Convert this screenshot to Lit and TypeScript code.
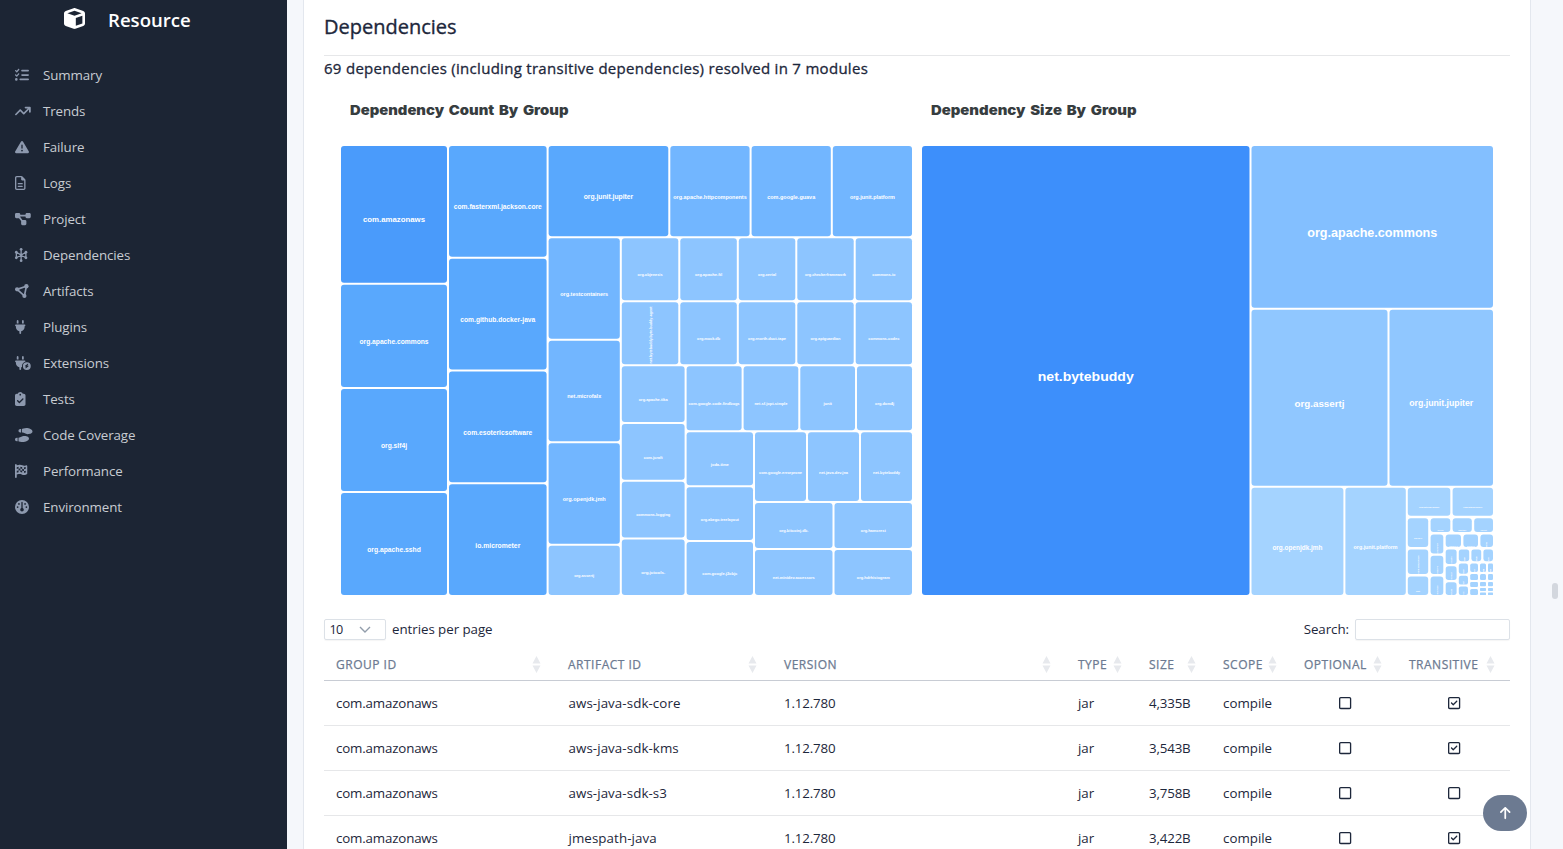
import { LitElement, html, svg, css } from "lit";
import { customElement, property } from "lit/decorators.js";

type Icon = { w: number; body: unknown };

const path = (w: number, d: string): Icon => ({ w, body: svg`<path d=${d}></path>` });

const ICONS: Record<string, Icon> = {
  cube: path(512, "M234.5 5.7c13.9-5 29.1-5 43.1 0l192 68.6C495 83.4 512 107.5 512 134.6V377.4c0 27-17 51.2-42.5 60.3l-192 68.6c-13.9 5-29.1 5-43.1 0l-192-68.6C17 428.6 0 404.5 0 377.4V134.6c0-27 17-51.2 42.5-60.3l192-68.6zM256 66L82.3 128 256 190l173.7-62L256 66zm32 368.6l160-57.1v-188L288 246.6v188z"),
  list: path(512, "M152.1 38.2c9.9 8.9 10.7 24 1.8 33.9l-72 80c-4.4 4.9-10.6 7.8-17.2 7.9s-12.9-2.4-17.6-7L7 113C-2.3 103.6-2.3 88.4 7 79s24.6-9.4 33.9 0l22.1 22.1 55.1-61.2c8.9-9.9 24-10.7 33.9-1.8zm0 160c9.9 8.9 10.7 24 1.8 33.9l-72 80c-4.4 4.9-10.6 7.8-17.2 7.9s-12.9-2.4-17.6-7L7 273c-9.4-9.4-9.4-24.6 0-33.9s24.6-9.4 33.9 0l22.1 22.1 55.1-61.2c8.9-9.9 24-10.7 33.9-1.8zM224 96c0-17.7 14.3-32 32-32H480c17.7 0 32 14.3 32 32s-14.3 32-32 32H256c-17.7 0-32-14.3-32-32zm0 160c0-17.7 14.3-32 32-32H480c17.7 0 32 14.3 32 32s-14.3 32-32 32H256c-17.7 0-32-14.3-32-32zM160 416c0-17.7 14.3-32 32-32H480c17.7 0 32 14.3 32 32s-14.3 32-32 32H192c-17.7 0-32-14.3-32-32zM48 368a48 48 0 1 1 0 96 48 48 0 1 1 0-96z"),
  trend: path(576, "M384 160c-17.7 0-32-14.3-32-32s14.3-32 32-32H544c17.7 0 32 14.3 32 32V288c0 17.7-14.3 32-32 32s-32-14.3-32-32V205.3L342.6 374.6c-12.5 12.5-32.8 12.5-45.3 0L192 269.3 54.6 406.6c-12.5 12.5-32.8 12.5-45.3 0s-12.5-32.8 0-45.3l160-160c12.5-12.5 32.8-12.5 45.3 0L320 306.7 466.7 160H384z"),
  warn: path(512, "M256 32c14.2 0 27.3 7.5 34.5 19.8l216 368c7.3 12.4 7.3 27.7 .2 40.1S486.3 480 472 480H40c-14.3 0-27.6-7.7-34.7-20.1s-7-27.8 .2-40.1l216-368C228.7 39.5 241.8 32 256 32zm0 128c-13.3 0-24 10.7-24 24V296c0 13.3 10.7 24 24 24s24-10.7 24-24V184c0-13.3-10.7-24-24-24zm32 224a32 32 0 1 0 -64 0 32 32 0 1 0 64 0z"),
  file: path(384, "M64 464c-8.8 0-16-7.2-16-16V64c0-8.8 7.2-16 16-16H224v80c0 17.7 14.3 32 32 32h80V448c0 8.8-7.2 16-16 16H64zM64 0C28.7 0 0 28.7 0 64V448c0 35.3 28.7 64 64 64H320c35.3 0 64-28.7 64-64V154.5c0-17-6.7-33.3-18.7-45.3L274.7 18.7C262.7 6.7 246.5 0 229.5 0H64zm56 256c-13.3 0-24 10.7-24 24s10.7 24 24 24H264c13.3 0 24-10.7 24-24s-10.7-24-24-24H120zm0 96c-13.3 0-24 10.7-24 24s10.7 24 24 24H264c13.3 0 24-10.7 24-24s-10.7-24-24-24H120z"),
  project: path(576, "M0 80C0 53.5 21.5 32 48 32h96c26.5 0 48 21.5 48 48V96H384V80c0-26.5 21.5-48 48-48h96c26.5 0 48 21.5 48 48v96c0 26.5-21.5 48-48 48H432c-26.5 0-48-21.5-48-48V160H192v16c0 1.7-.1 3.4-.3 5L272 288h96c26.5 0 48 21.5 48 48v96c0 26.5-21.5 48-48 48H272c-26.5 0-48-21.5-48-48V336c0-1.7 .1-3.4 .3-5L144 224H48c-26.5 0-48-21.5-48-48V80z"),
  hexnodes: {
    w: 448,
    body: svg`<g fill="none" stroke="currentColor" stroke-width="48"><path d="M224 60V452M50 156L398 356M50 356L398 156M50 156V356M398 156V356"></path></g>
      <circle cx="224" cy="48" r="50"></circle><circle cx="224" cy="464" r="50"></circle><circle cx="224" cy="256" r="56"></circle>
      <circle cx="48" cy="152" r="50"></circle><circle cx="400" cy="152" r="50"></circle><circle cx="48" cy="360" r="50"></circle><circle cx="400" cy="360" r="50"></circle>`,
  },
  nodes: {
    w: 512,
    body: svg`<path d="M76 196L416 84L344 432Z" fill="none" stroke="currentColor" stroke-width="62"></path>
      <circle cx="76" cy="196" r="76"></circle><circle cx="416" cy="80" r="80"></circle><circle cx="344" cy="436" r="76"></circle>`,
  },
  plug: path(384, "M96 0C78.3 0 64 14.3 64 32v96h64V32c0-17.7-14.3-32-32-32zM288 0c-17.7 0-32 14.3-32 32v96h64V32c0-17.7-14.3-32-32-32zM32 160c-17.7 0-32 14.3-32 32s14.3 32 32 32v32c0 77.4 55 142 128 156.8V480c0 17.7 14.3 32 32 32s32-14.3 32-32V412.8C297 398 352 333.4 352 256V224c17.7 0 32-14.3 32-32s-14.3-32-32-32H32z"),
  plugbolt: path(576, "M96 0C78.3 0 64 14.3 64 32v96h64V32c0-17.7-14.3-32-32-32zM288 0c-17.7 0-32 14.3-32 32v96h64V32c0-17.7-14.3-32-32-32zM32 160c-17.7 0-32 14.3-32 32s14.3 32 32 32v32c0 77.4 55 142 128 156.8V480c0 17.7 14.3 32 32 32s32-14.3 32-32V412.8c12.3-2.5 24.1-6.4 35.1-11.5c-2.1-10.8-3.1-21.9-3.1-33.3c0-80.3 53.8-148.1 127.3-169.2c.5-2.2 .7-4.5 .7-6.8c0-17.7-14.3-32-32-32H32zM432 512a144 144 0 1 0 0-288 144 144 0 1 0 0 288zm47.9-225c4.3 3.7 5.4 9.9 2.6 14.9L452.4 356H488c5.2 0 9.8 3.3 11.4 8.2s-.1 10.3-4.2 13.4l-96 72c-4.5 3.4-10.8 3.2-15.1-.6s-5.4-9.9-2.6-14.9L411.6 380H376c-5.2 0-9.8-3.3-11.4-8.2s.1-10.3 4.2-13.4l96-72c4.5-3.4 10.8-3.2 15.1 .6z"),
  clipboard: path(384, "M192 0c-41.8 0-77.4 26.7-90.5 64H64C28.7 64 0 92.7 0 128V448c0 35.3 28.7 64 64 64H320c35.3 0 64-28.7 64-64V128c0-35.3-28.7-64-64-64H282.5C269.4 26.7 233.8 0 192 0zm0 64a32 32 0 1 1 0 64 32 32 0 1 1 0-64zM305 273L177 401c-9.4 9.4-24.6 9.4-33.9 0L79 337c-9.4-9.4-9.4-24.6 0-33.9s24.6-9.4 33.9 0l47 47L271 239c9.4-9.4 24.6-9.4 33.9 0s9.4 24.6 0 33.9z"),
  shoes: path(640, "M416 0C352.3 0 256 32 256 32V160c48 0 76 16 104 32s56 32 104 32c56.4 0 176-16 176-96S512 0 416 0zM128 96c0 35.3 28.7 64 64 64h32V32H192c-35.3 0-64 28.7-64 64zM288 512c96 0 224-48 224-128s-119.6-96-176-96c-48 0-76 16-104 32s-56 32-104 32V480s96.3 32 160 32zM0 416c0 35.3 28.7 64 64 64H96V352H64c-35.3 0-64 28.7-64 64z"),
  flag: {
    w: 448,
    body: svg`<path fill-rule="evenodd" d="M32 0C50 0 64 14 64 32V48L134 33C180 22 226 27 268 48C306 67 350 70 390 55L406 48C426 38 448 53 448 75V346C448 359 440 371 427 376L393 389C345 407 291 404 245 381C209 363 168 359 129 368L64 384V480C64 498 50 512 32 512S0 498 0 480V32C0 14 14 0 32 0ZM64 116V184L130 168V100ZM130 168V236L196 228V162ZM64 250V318L130 302V236ZM196 96V162Q230 166 262 178V112Q230 98 196 96ZM196 228V296Q230 298 262 312V244Q230 230 196 228ZM262 178V244Q296 256 328 256V190Q294 190 262 178ZM328 122V190Q362 190 394 178V112Q362 124 328 122ZM328 256V324Q362 324 394 312V244Q362 256 328 256Z"></path>`,
  },
  gauge: path(512, "M0 256a256 256 0 1 1 512 0A256 256 0 1 1 0 256zm320 96c0-26.9-16.5-49.9-40-59.3V88c0-13.3-10.7-24-24-24s-24 10.7-24 24V292.7c-23.5 9.5-40 32.5-40 59.3c0 35.3 28.7 64 64 64s64-28.7 64-64zM144 176a32 32 0 1 0 0-64 32 32 0 1 0 0 64zm-16 80a32 32 0 1 0 -64 0 32 32 0 1 0 64 0zm288 32a32 32 0 1 0 0-64 32 32 0 1 0 0 64zM400 144a32 32 0 1 0 -64 0 32 32 0 1 0 64 0z"),
  square: path(448, "M384 80c8.8 0 16 7.2 16 16V416c0 8.8-7.2 16-16 16H64c-8.8 0-16-7.2-16-16V96c0-8.8 7.2-16 16-16H384zM64 32C28.7 32 0 60.7 0 96V416c0 35.3 28.7 64 64 64H384c35.3 0 64-28.7 64-64V96c0-35.3-28.7-64-64-64H64z"),
  squareCheck: path(448, "M64 80c-8.8 0-16 7.2-16 16V416c0 8.8 7.2 16 16 16H384c8.8 0 16-7.2 16-16V96c0-8.8-7.2-16-16-16H64zM0 96C0 60.7 28.7 32 64 32H384c35.3 0 64 28.7 64 64V416c0 35.3-28.7 64-64 64H64c-35.3 0-64-28.7-64-64V96zM337 209L209 337c-9.4 9.4-24.6 9.4-33.9 0l-64-64c-9.4-9.4-9.4-24.6 0-33.9s24.6-9.4 33.9 0l47 47L303 175c9.4-9.4 24.6-9.4 33.9 0s9.4 24.6 0 33.9z"),
  up: path(384, "M214.6 41.4c-12.5-12.5-32.8-12.5-45.3 0l-160 160c-12.5 12.5-12.5 32.8 0 45.3s32.8 12.5 45.3 0L160 141.2V448c0 17.7 14.3 32 32 32s32-14.3 32-32V141.2L329.4 246.6c12.5 12.5 32.8 12.5 45.3 0s12.5-32.8 0-45.3l-160-160z"),
};

const icon = (name: string) => {
  const i = ICONS[name];
  return html`<svg class="icon" viewBox="0 0 ${i.w} 512" aria-hidden="true">${i.body}</svg>`;
};

// [left, top, right, bottom, shade, label, label width, font size, label centre y, vertical]
type Cell = [number, number, number, number, string, string?, number?, number?, number?, boolean?];

const A = "#4a9bfb", B = "#59a8fd", C = "#72b6ff", D = "#8dc5ff";

const COUNT: Cell[] = [
  [341, 146, 447, 282.7, A, "com.amazonaws", 62, 8, 219.5],
  [341, 284.7, 447, 387, B, "org.apache.commons", 69, 7, 341.5],
  [341, 389, 447, 491, B, "org.slf4j", 26, 7, 445.5],
  [341, 493, 447, 595, B, "org.apache.sshd", 53.5, 7, 549.5],
  [449, 146, 546.6, 256.7, B, "com.fasterxml.jackson.core", 88, 7, 206.5],
  [449, 258.7, 546.6, 369.4, B, "com.github.docker-java", 75, 7, 319.5],
  [449, 371.4, 546.6, 482.2, B, "com.esotericsoftware", 69, 7, 432.5],
  [449, 484.2, 546.6, 595, B, "io.micrometer", 45, 7, 545.5],
  [548.6, 146, 668.3, 236.3, B, "org.junit.jupiter", 49.5, 7.4, 196.5],
  [670.3, 146, 749.6, 236.3, C, "org.apache.httpcomponents", 73.5, 5.6, 197],
  [751.6, 146, 830.8, 236.3, C, "com.google.guava", 48, 5.6, 197],
  [832.8, 146, 912, 236.3, C, "org.junit.platform", 45, 5.6, 197],
  [548.6, 238.3, 619.8, 338.8, C, "org.testcontainers", 48, 5.6, 294.5],
  [548.6, 340.8, 619.8, 441.3, C, "net.microfalx", 34, 5.6, 396],
  [548.6, 443.3, 619.8, 543.8, C, "org.openjdk.jmh", 43, 5.6, 499.3],
  [548.6, 545.8, 619.8, 595, D, "org.assertj", 20, 4, 575.5],
  [621.8, 238.3, 678.3, 300.3, D, "org.objenesis", 25, 4, 274.8],
  [680.3, 238.3, 736.8, 300.3, D, "org.apache.ftl", 27, 4, 274.8],
  [738.8, 238.3, 795.3, 300.3, D, "org.xerial", 18, 4, 274.8],
  [797.3, 238.3, 853.7, 300.3, D, "org.checkerframework", 41, 4, 274.8],
  [855.7, 238.3, 912, 300.3, D, "commons-io", 23, 4, 274.8],
  [621.8, 302.3, 678.3, 364.3, D, "net.bytebuddy.byte-buddy-agent", 57, 4.4, 335, true],
  [680.3, 302.3, 736.8, 364.3, D, "org.mock.db", 23, 4, 338.8],
  [738.8, 302.3, 795.3, 364.3, D, "org.rnorth.duct-tape", 38, 4, 338.8],
  [797.3, 302.3, 853.7, 364.3, D, "org.apiguardian", 30, 4, 338.8],
  [855.7, 302.3, 912, 364.3, D, "commons-codec", 31, 4, 338.8],
  [621.8, 366.3, 684.6, 422, D, "org.apache.tika", 29, 4, 399.8],
  [621.8, 424, 684.6, 479.7, D, "com.jcraft", 19, 4, 457.8],
  [621.8, 481.7, 684.6, 537.4, D, "commons-logging", 34, 4, 515],
  [621.8, 539.4, 684.6, 595, D, "org.jctools.", 24, 4, 573],
  [686.6, 366.3, 741.6, 430.2, D, "com.google.code.findbugs", 51, 4, 403.8],
  [743.6, 366.3, 798.3, 430.2, D, "net.sf.jopt-simple", 33, 4, 403.8],
  [800.3, 366.3, 855, 430.2, D, "junit", 8.5, 4, 403.8],
  [857, 366.3, 912, 430.2, D, "org.dom4j", 19, 4, 403.8],
  [686.6, 432.2, 753, 485.2, D, "joda-time", 18, 4, 464.8],
  [686.6, 487.2, 753, 540, D, "org.abego.treelayout", 38, 4, 519.8],
  [686.6, 542, 753, 595, D, "com.google.j2objc", 35, 4, 573.8],
  [755, 432.2, 806, 501, D, "com.google.errorprone", 43, 4, 472.8],
  [808, 432.2, 859, 501, D, "net.java.dev.jna", 29, 4, 472.8],
  [861, 432.2, 912, 501, D, "net.bytebuddy", 27, 4, 472.8],
  [755, 503, 832.5, 548, D, "org.bitcoinj.db.", 29, 4, 530.8],
  [834.5, 503, 912, 548, D, "org.hamcrest", 25, 4, 530.8],
  [755, 550, 832.5, 595, D, "net.minidev.accessors", 42, 4, 577.8],
  [834.5, 550, 912, 595, D, "org.hdrhistogram", 33, 4, 577.8],
];

const E = "#3d8ffb", F = "#83bfff", G = "#90c7ff", H = "#a4d3ff";

const SIZE: Cell[] = [
  [922, 146, 1249.5, 595, E, "net.bytebuddy", 96, 13.4, 376.5],
  [1251.5, 146, 1493, 307.7, F, "org.apache.commons", 130, 13, 232.5],
  [1251.5, 309.7, 1387.5, 485.7, G, "org.assertj", 50, 9.4, 404],
  [1389.5, 309.7, 1493, 485.7, G, "org.junit.jupiter", 64, 8.6, 403],
  [1251.5, 487.7, 1343.4, 595, H, "org.openjdk.jmh", 50, 6.6, 547.3],
  [1345.4, 487.7, 1405.8, 595, H, "org.junit.platform", 44, 5.6, 547.3],
  [1407.8, 487.7, 1450.3, 515.8, H, "com.fasterxml.jackson", 20, 2, 507.5],
  [1452.6, 487.7, 1493, 515.8, H, "com.github.docker", 19, 2, 507.5],
  [1407.8, 518.2, 1428.2, 547, H, "org.slf4j", 8, 2, 538.6],
  [1407.8, 549.4, 1428.2, 574, H, "com.amazonaws", 18, 2, 564.5, true],
  [1407.8, 576.4, 1428.2, 595, H, "junit", 4, 2, 591.5],
  [1430.6, 518.2, 1450.3, 532, H, "org.xerial", 6, 2, 530.5],
  [1452.6, 518.2, 1471.8, 532, H, "joda-time", 8, 2, 530.5],
  [1474.2, 518.2, 1493, 532, H, "com.jcraft", 6, 2, 530.5],
  [1430.6, 534.4, 1443.3, 553.4, H, "io.micrometer", 11, 2, 548.3, true],
  [1430.6, 555.8, 1443.3, 574, H, "org.dom4j", 8, 2, 570, true],
  [1430.6, 576.4, 1443.3, 595, H, "org.jctools", 9, 2, 590, true],
  [1445.7, 534.4, 1461, 547, H, "commons-io", 9, 2, 546.5],
  [1463.4, 534.4, 1478, 547, H, "org.mock", 8, 2, 546.5],
  [1480.4, 534.4, 1493, 547, H, "org.tika", 5, 2, 544.5, true],
  [1445.7, 549.4, 1456.6, 564, H, "org.jmh", 7, 2, 560, true],
  [1445.7, 566.2, 1456.6, 580, H, "org.duct", 7, 2, 576, true],
  [1445.7, 582.2, 1456.6, 595, H, "net.jna", 6, 2, 592, true],
  [1458.8, 549.4, 1469.2, 561.2, H, "org.sshd", 4, 2, 559, true],
  [1471.4, 549.4, 1481.2, 561.2, H, "org.apis", 5, 2, 558.6, true],
  [1483.4, 549.4, 1493, 561.2, H, "org.hdr", 4, 2, 559, true],
  [1458.8, 563.4, 1468, 573.8, H, "net.jopt", 4, 2, 571.5, true],
  [1458.8, 575.8, 1468, 584.6, H, "com.esot", 3, 2, 583, true],
  [1458.8, 586.6, 1468, 595, H, "com.goog", 3, 2, 593, true],
  [1470.2, 563.4, 1478, 572, H, "org.hamc", 3, 2, 570.5, true],
  [1480, 563.4, 1486, 572, H, "net.mini", 3, 2, 570.5, true],
  [1488, 563.4, 1493, 572, H, "org.abeg", 3, 2, 570.5, true],
  [1470.2, 574, 1478, 580, H], [1480, 574, 1486, 580, H], [1488, 574, 1493, 580, H],
  [1470.2, 582, 1478, 587, H], [1470.2, 589, 1478, 595, H],
  [1480, 582, 1486, 586.3, H], [1488, 582, 1493, 586.3, H],
  [1480, 588, 1486, 591, H], [1488, 588, 1493, 591, H],
  [1480, 592.5, 1486, 595, H], [1488, 592.5, 1493, 595, H],
];

@customElement("tree-map")
class TreeMap extends LitElement {
  @property() heading = "";
  @property({ type: Number }) originX = 0;
  @property({ attribute: false }) cells: Cell[] = [];

  static styles = css`
    :host { display: block; width: 581px; height: 509px; }
    svg { display: block; width: 581px; height: 509px; }
    .heading { font: 900 13.5px Inter, sans-serif; fill: #373d3f; word-spacing: 1.6px; }
    .label { font-family: "Liberation Sans", Arial, sans-serif; font-weight: 700; fill: #fff; text-anchor: middle; }
  `;

  render() {
    return html`<svg viewBox="${this.originX} 94 581 509">
      <text class="heading" x=${this.originX + 17} y="115" lengthAdjust="spacingAndGlyphs" textLength=${this.heading.includes("Count") ? 218.5 : 205.5}>${this.heading}</text>
      ${this.cells.map(([l, t, r, b, fill, text, w, size, cy, vertical]) => {
        const cx = (l + r) / 2;
        const y = cy ?? 0;
        const radius = Math.min(3, (r - l) / 4, (b - t) / 4);
        return svg`<rect x=${l} y=${t} width=${r - l} height=${b - t} rx=${radius} fill=${fill}></rect>
          ${text
            ? svg`<text class="label" x=${cx} y=${y + (size ?? 4) * 0.34} font-size=${size ?? 4} textLength=${w ?? 10}
                lengthAdjust="spacingAndGlyphs" transform=${vertical ? `rotate(-90 ${cx} ${y})` : "rotate(0)"}>${text}</text>`
            : ""}`;
      })}
    </svg>`;
  }
}

const NAV: [string, string][] = [
  ["list", "Summary"], ["trend", "Trends"], ["warn", "Failure"], ["file", "Logs"],
  ["project", "Project"], ["hexnodes", "Dependencies"], ["nodes", "Artifacts"], ["plug", "Plugins"],
  ["plugbolt", "Extensions"], ["clipboard", "Tests"], ["shoes", "Code Coverage"],
  ["flag", "Performance"], ["gauge", "Environment"],
];

const HEADERS = ["Group ID", "Artifact ID", "Version", "Type", "Size", "Scope", "Optional", "Transitive"];

const ROWS: [string, string, string, boolean][] = [
  ["com.amazonaws", "aws-java-sdk-core", "4,335B", true],
  ["com.amazonaws", "aws-java-sdk-kms", "3,543B", true],
  ["com.amazonaws", "aws-java-sdk-s3", "3,758B", false],
  ["com.amazonaws", "jmespath-java", "3,422B", true],
];

@customElement("app-root")
class AppRoot extends LitElement {
  static styles = css`
    :host {
      display: flex; position: relative; width: 100%; height: 849px; overflow: hidden;
      background: #f5f7fb; color: #1d273b;
      font: 13.33px/20px "Open Sans", "Noto Sans", sans-serif;
    }
    * { box-sizing: border-box; }
    .icon { display: block; height: 14px; fill: currentColor; flex: none; overflow: visible; }
    .sidebar { flex: none; width: 287px; background: #1c2534; color: #c8ccd2; }
    .brand { display: flex; align-items: center; height: 57px; padding: 0 0 17px 64px; color: #fff; font-size: 18.6px; font-weight: 600; }
    .brand .icon { height: 21px; margin: -3px 23px 0 0; }
    .nav { display: flex; flex-direction: column; }
    .item { display: flex; align-items: center; height: 36px; padding-left: 15px; letter-spacing: -0.1px; }
    .item .icon { color: #8d99ae; }
    .glyph { width: 28px; }
    .card { flex: none; width: 1228px; margin-left: 16px; padding: 0 20px; background: #fff; border: solid #e3e7ee; border-width: 0 1px; }
    .title { height: 56px; padding-top: 13px; border-bottom: 1px solid #e6e7e9; font-size: 20px; line-height: 28px; -webkit-text-stroke: 0.35px currentColor; }
    .subtitle { height: 38px; padding-top: 2px; font-size: 15px; letter-spacing: 0.29px; -webkit-text-stroke: 0.3px currentColor; }
    .charts { display: flex; padding-left: 9px; height: 525px; }
    .tools { display: flex; align-items: center; justify-content: space-between; height: 21px; }
    .group { display: flex; align-items: center; gap: 6px; letter-spacing: -0.05px; }
    .text { padding-bottom: 2px; }
    .select { display: flex; align-items: center; justify-content: space-between; width: 62px; height: 21px; padding: 0 14px 0 4.5px; border: 1px solid #dce1e7; border-radius: 2px; font-size: 12.6px; letter-spacing: -0.7px; box-shadow: 0 1px 1px #0000000a; }
    .select svg { width: 12px; height: 8px; }
    .search { width: 155px; height: 21px; border: 1px solid #dce1e7; border-radius: 2px; box-shadow: 0 1px 1px #0000000a; }
    .row { display: grid; grid-template-columns: 232px 216px 294px 71px 74px 81px 105px 113px; height: 45px; align-items: center; border-bottom: 1px solid #e6e7e9; }
    .cell { padding-left: 12px; white-space: nowrap; }
    .first { letter-spacing: -0.17px; }
    .second { letter-spacing: 0.08px; padding-left: 12.5px; }
    .head { height: 41px; padding-top: 8px; border-color: #c8ccd4; color: #6c7a91; font-size: 12px; letter-spacing: 0.5px; text-transform: uppercase; -webkit-text-stroke: 0.25px currentColor; }
    .head .cell { display: flex; align-items: center; justify-content: space-between; padding-right: 15px; }
    .head .name { padding-top: 2px; }
    .sort { width: 9px; height: 17px; fill: #e7e9ed; stroke: none; }
    .center { display: flex; justify-content: center; padding-left: 0.5px; }
    .thumb { position: absolute; left: 1552px; top: 583px; width: 6px; height: 16px; border-radius: 3px; background: #d3d7de; }
    .top { position: absolute; left: 1483px; top: 795px; width: 44px; height: 36px; border-radius: 18px; display: flex; align-items: center; justify-content: center; background: #6c7a91; color: #fff; }
  `;

  render() {
    const box = (on: boolean) => html`<div class="center">${icon(on ? "squareCheck" : "square")}</div>`;
    return html`
      <nav class="sidebar">
        <div class="brand">${icon("cube")}<span>Resource</span></div>
        <div class="nav">
          ${NAV.map(([i, t]) => html`<div class="item"><span class="glyph">${icon(i)}</span><span>${t}</span></div>`)}
        </div>
      </nav>
      <main class="card">
        <div class="title">Dependencies</div>
        <div class="subtitle">69 dependencies (including transitive dependencies) resolved in 7 modules</div>
        <div class="charts">
          <tree-map heading="Dependency Count By Group" .originX=${333} .cells=${COUNT}></tree-map>
          <tree-map heading="Dependency Size By Group" .originX=${914} .cells=${SIZE}></tree-map>
        </div>
        <div class="tools">
          <div class="group">
            <span class="select">10<svg viewBox="0 0 12 8"><path d="M1 1l5 5 5-5" fill="none" stroke="#929dab" stroke-width="1.4"></path></svg></span>
            <span class="text">entries per page</span>
          </div>
          <div class="group"><span class="text">Search:</span><span class="search"></span></div>
        </div>
        <div class="row head">
          ${HEADERS.map((h) => html`<div class="cell"><span class="name">${h}</span><svg class="sort" viewBox="0 0 9 17"><path d="M4.5 0L8.5 7.5H.5ZM.5 9.5H8.5L4.5 17Z"></path></svg></div>`)}
        </div>
        ${ROWS.map(([g, a, s, t]) => html`<div class="row">
          <div class="cell first">${g}</div><div class="cell second">${a}</div><div class="cell first">1.12.780</div>
          <div class="cell">jar</div><div class="cell first">${s}</div><div class="cell">compile</div>
          ${box(false)}${box(t)}
        </div>`)}
      </main>
      <span class="thumb"></span>
      <span class="top">${icon("up")}</span>
    `;
  }
}
